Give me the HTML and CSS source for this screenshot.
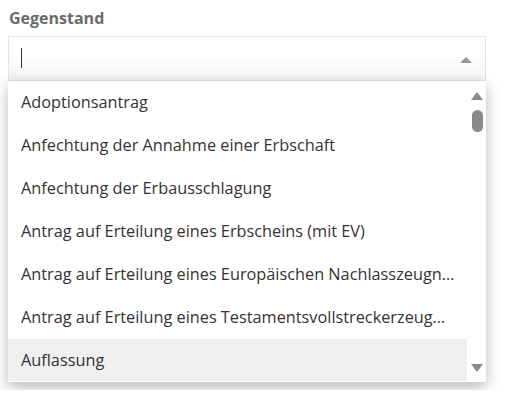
FILE: index.html
```html
<!DOCTYPE html>
<html lang="de">
<head>
<meta charset="utf-8">
<link rel="stylesheet" href="styles.css">
</head>
<body>
<div class="field">
  <label class="label">Gegenstand</label>
  <div class="select">
    <span class="caret"></span>
    <span class="arrow-up"></span>
  </div>
  <div class="dropdown">
    <ul class="options">
      <li class="option">Adoptionsantrag</li>
      <li class="option">Anfechtung der Annahme einer Erbschaft</li>
      <li class="option">Anfechtung der Erbausschlagung</li>
      <li class="option">Antrag auf Erteilung eines Erbscheins (mit EV)</li>
      <li class="option">Antrag auf Erteilung eines Europäischen Nachlasszeugnisses</li>
      <li class="option">Antrag auf Erteilung eines Testamentsvollstreckerzeugnisses</li>
      <li class="option active">Auflassung</li>
    </ul>
    <div class="scrollbar">
      <span class="sb-up"></span>
      <span class="sb-thumb"></span>
      <span class="sb-spacer"></span>
      <span class="sb-down"></span>
    </div>
  </div>
</div>
</body>
</html>
```
FILE: styles.css
```css
html, body {
  margin: 0;
  padding: 0;
  background: #fff;
  font-family: "Open Sans", "DejaVu Sans", sans-serif;
}
.field {
  padding: 8px;
  width: 478px;
}
.label {
  display: block;
  font-weight: 700;
  font-size: 16px;
  line-height: 20px;
  color: #6b6b6b;
  margin: 0 0 8px 1px;
}
.select {
  box-sizing: border-box;
  height: 45px;
  border: 1px solid #e3e3e3;
  background: linear-gradient(#ffffff 40%, #f3f3f3);
  display: flex;
  align-items: center;
  justify-content: space-between;
  padding: 0 13px 0 12px;
}
.caret {
  width: 1px;
  height: 20px;
  background: #333;
  margin-top: -1px;
}
.arrow-up {
  width: 0;
  height: 0;
  border-left: 6px solid transparent;
  border-right: 6px solid transparent;
  border-bottom: 6px solid #999;
  margin-top: 3px;
}
.dropdown {
  display: flex;
  height: 301px;
  background: #fff;
  box-shadow: 0 5px 14px rgba(0, 0, 0, 0.28);
}
.options {
  list-style: none;
  margin: 0;
  padding: 0;
  flex: 1;
  min-width: 0;
  overflow: hidden;
}
.option {
  height: 43px;
  line-height: 42px;
  padding: 0 12px 0 13px;
  font-size: 16.3px;
  color: #333;
  white-space: nowrap;
  overflow: hidden;
  text-overflow: ellipsis;
}
.option.active {
  background: #efefef;
  height: 42px;
  line-height: 42px;
}
.scrollbar {
  width: 19px;
  display: flex;
  flex-direction: column;
  align-items: center;
  padding: 11px 0 10px 1px;
  box-sizing: border-box;
}
.sb-up {
  width: 0;
  height: 0;
  border-left: 6px solid transparent;
  border-right: 6px solid transparent;
  border-bottom: 8px solid #8a8a8a;
}
.sb-thumb {
  width: 11px;
  height: 22px;
  border-radius: 6px;
  background: #8a8a8a;
  margin-top: 10px;
}
.sb-spacer {
  flex: 1;
}
.sb-down {
  width: 0;
  height: 0;
  border-left: 6px solid transparent;
  border-right: 6px solid transparent;
  border-top: 8px solid #8a8a8a;
}
```
